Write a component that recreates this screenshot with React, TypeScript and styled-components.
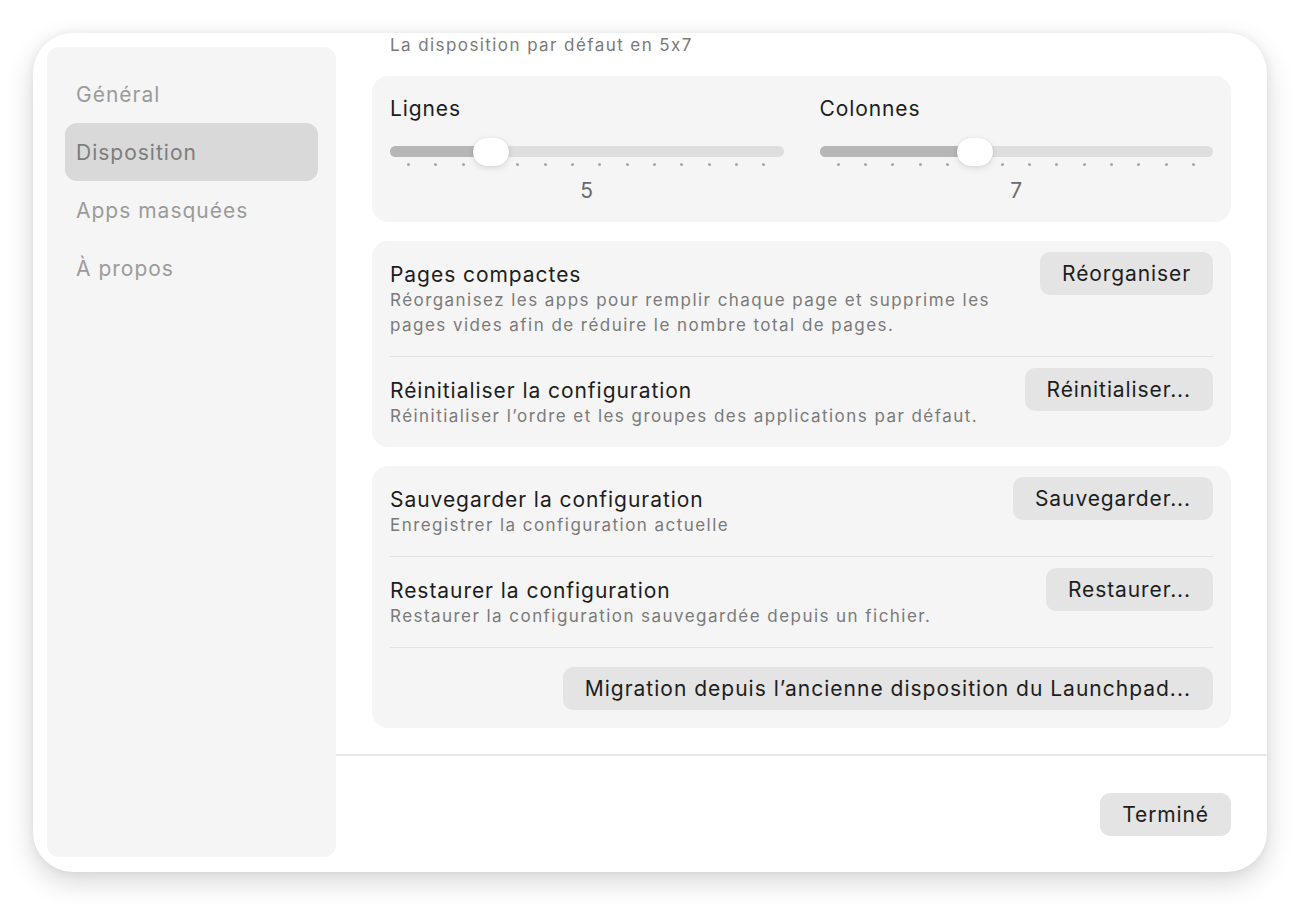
import React from 'react';
import styled, { createGlobalStyle } from 'styled-components';

const GlobalStyle = createGlobalStyle`
  html, body {
    margin: 0;
    padding: 0;
    background: #ffffff;
    font-family: Inter, "Noto Sans", "Liberation Sans", sans-serif;
    font-feature-settings: 'calt' 0;
    -webkit-font-smoothing: antialiased;
  }
  * {
    box-sizing: border-box;
  }
`;

const Page = styled.div`
  width: 1300px;
  height: 904px;
  padding: 33px;
  background: #ffffff;
`;

const Window = styled.div`
  width: 1234px;
  height: 839px;
  display: flex;
  background: #ffffff;
  border-radius: 40px;
  overflow: hidden;
  box-shadow: 0 10px 28px rgba(0, 0, 0, 0.16), 0 0 10px rgba(0, 0, 0, 0.06);
`;

const Sidebar = styled.nav`
  width: 289px;
  margin: 14px 0 15px 14px;
  padding: 18px 18px 0;
  background: #f5f5f5;
  border-radius: 12px;
  display: flex;
  flex-direction: column;
`;

const NavItem = styled.div<{ $active?: boolean }>`
  height: 58px;
  padding: 0 11px;
  display: flex;
  align-items: center;
  font-size: 21px;
  letter-spacing: 1px;
  color: ${(p) => (p.$active ? '#7d7d7d' : '#9b9b9b')};
  background: ${(p) => (p.$active ? '#d9d9d9' : 'transparent')};
  border-radius: 12px;
`;

const Main = styled.div`
  flex: 1;
  display: flex;
  flex-direction: column;
`;

const Scroll = styled.div`
  height: 721px;
  padding: 0 36px;
  display: flex;
  flex-direction: column;
  gap: 19px;
  overflow: hidden;
`;

const Caption = styled.div`
  font-size: 17px;
  line-height: 24px;
  letter-spacing: 1.42px;
  color: #7a7a7a;
  padding-left: 18px;
`;

const Card = styled.section`
  background: #f5f5f5;
  border-radius: 16px;
  padding: 0 18px;
  flex-shrink: 0;
`;

const SliderCard = styled(Card)`
  padding: 20px 18px 19px;
  display: grid;
  grid-template-columns: 1fr 1fr;
  column-gap: 36px;
`;

const SliderBlock = styled.div`
  display: flex;
  flex-direction: column;
`;

const SliderLabel = styled.div`
  font-size: 21px;
  line-height: 26px;
  letter-spacing: 0.9px;
  color: #1d1d1d;
`;

const TrackWrap = styled.div`
  position: relative;
  margin-top: 24px;
`;

const Track = styled.div`
  height: 11px;
  border-radius: 6px;
  background: #dedede;
  overflow: hidden;
`;

const Fill = styled.div`
  height: 100%;
  background: #b6b6b6;
`;

const Thumb = styled.div`
  position: absolute;
  top: -8px;
  width: 36px;
  height: 28px;
  margin-left: -18px;
  border-radius: 14px;
  background: #ffffff;
  box-shadow: 0 2px 6px rgba(0, 0, 0, 0.12), 0 0 1px rgba(0, 0, 0, 0.15);
`;

const Ticks = styled.div`
  display: flex;
  justify-content: space-between;
  padding: 0 18px 0 17px;
  margin-top: 6px;
`;

const Tick = styled.span`
  width: 3px;
  height: 3px;
  border-radius: 50%;
  background: #a8a8a8;
`;

const SliderValue = styled.div`
  margin-top: 13px;
  text-align: center;
  font-size: 21px;
  line-height: 24px;
  color: #6b6b6b;
`;

const Row = styled.div<{ $divider?: boolean }>`
  display: flex;
  align-items: flex-start;
  justify-content: space-between;
  padding: 11px 0 18px;
  border-top: ${(p) => (p.$divider ? '1px solid #e3e3e3' : 'none')};
`;

const ActionRow = styled.div`
  display: flex;
  justify-content: flex-end;
  padding: 19px 0 18px;
  border-top: 1px solid #e3e3e3;
`;

const RowText = styled.div`
  padding-top: 10px;
`;

const Title = styled.div`
  font-size: 21px;
  line-height: 26px;
  letter-spacing: 0.95px;
  color: #1d1d1d;
`;

const Desc = styled.div`
  font-size: 17px;
  line-height: 25px;
  letter-spacing: 1.45px;
  color: #7a7a7a;
  max-width: 640px;
`;

const Button = styled.button<{ $wide?: boolean }>`
  height: 43px;
  padding: 0 22px;
  border: none;
  border-radius: 10px;
  background: #e4e4e4;
  font-family: inherit;
  font-feature-settings: 'calt' 0;
  font-size: 21px;
  letter-spacing: ${(p) => (p.$wide ? '1px' : '0.9px')};
  color: #1d1d1d;
  white-space: nowrap;
  flex-shrink: 0;
`;

const Rule = styled.div`
  height: 2px;
  background: #e8e8e8;
`;

const Footer = styled.div`
  flex: 1;
  display: flex;
  align-items: center;
  justify-content: flex-end;
  padding: 0 36px 0 0;
`;

type SliderProps = {
  label: string;
  value: number;
  min: number;
  max: number;
};

function Slider({ label, value, min, max }: SliderProps) {
  const count = max - min + 1;
  const index = value - min;
  // tick positions are inset 18px on a 394px track
  const pos = 18 + (index * (394 - 36)) / (count - 1);

  return (
    <SliderBlock>
      <SliderLabel>{label}</SliderLabel>
      <TrackWrap>
        <Track>
          <Fill style={{ width: pos }} />
        </Track>
        <Thumb style={{ left: pos }} />
      </TrackWrap>
      <Ticks>
        {Array.from({ length: count }).map((_, i) => (
          <Tick key={i} />
        ))}
      </Ticks>
      <SliderValue>{value}</SliderValue>
    </SliderBlock>
  );
}

const navItems = ['Général', 'Disposition', 'Apps masquées', 'À propos'];

export default function App() {
  return (
    <>
      <GlobalStyle />
      <Page>
        <Window>
          <Sidebar>
            {navItems.map((item) => (
              <NavItem key={item} $active={item === 'Disposition'}>
                {item}
              </NavItem>
            ))}
          </Sidebar>
          <Main>
            <Scroll>
              <Caption>La disposition par défaut en 5x7</Caption>
              <SliderCard>
                <Slider label="Lignes" value={5} min={2} max={15} />
                <Slider label="Colonnes" value={7} min={2} max={15} />
              </SliderCard>
              <Card>
                <Row>
                  <RowText>
                    <Title>Pages compactes</Title>
                    <Desc>
                      Réorganisez les apps pour remplir chaque page et supprime les pages vides
                      afin de réduire le nombre total de pages.
                    </Desc>
                  </RowText>
                  <Button>Réorganiser</Button>
                </Row>
                <Row $divider>
                  <RowText>
                    <Title>Réinitialiser la configuration</Title>
                    <Desc>Réinitialiser l’ordre et les groupes des applications par défaut.</Desc>
                  </RowText>
                  <Button>Réinitialiser...</Button>
                </Row>
              </Card>
              <Card>
                <Row>
                  <RowText>
                    <Title>Sauvegarder la configuration</Title>
                    <Desc>Enregistrer la configuration actuelle</Desc>
                  </RowText>
                  <Button>Sauvegarder...</Button>
                </Row>
                <Row $divider>
                  <RowText>
                    <Title>Restaurer la configuration</Title>
                    <Desc>Restaurer la configuration sauvegardée depuis un fichier.</Desc>
                  </RowText>
                  <Button>Restaurer...</Button>
                </Row>
                <ActionRow>
                  <Button $wide>Migration depuis l’ancienne disposition du Launchpad...</Button>
                </ActionRow>
              </Card>
            </Scroll>
            <Rule />
            <Footer>
              <Button>Terminé</Button>
            </Footer>
          </Main>
        </Window>
      </Page>
    </>
  );
}
